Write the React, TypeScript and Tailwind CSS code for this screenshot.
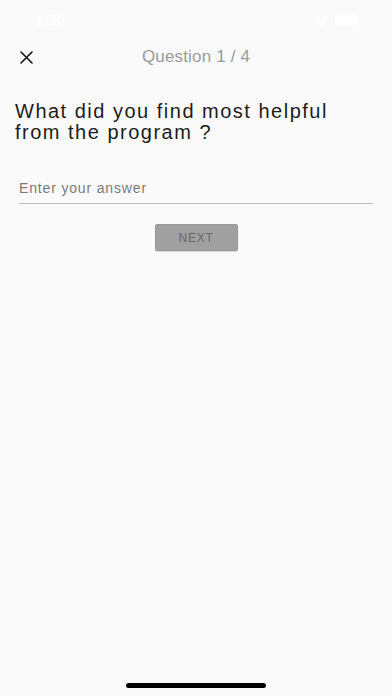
import { useState } from 'react';

export default function App() {
    const [answer, setAnswer] = useState('');

    return (
        <div className="relative flex flex-col w-[392px] h-[696px] bg-[#fafafa] overflow-hidden font-['Liberation_Sans',Arial,sans-serif]">
            {/* Status bar (white on light bg, barely visible) */}
            <div className="flex items-center justify-between h-[39px] px-[35px] pt-[2px]">
                <span className="text-[15px] font-semibold text-white">1:30</span>
                <div className="flex items-center gap-[5px] text-white">
                    <svg width="16" height="12" viewBox="0 0 16 12" fill="#ffffff">
                        <path d="M8 11.5l2.2-2.6a3.2 3.2 0 00-4.4 0zM3.9 6.9l1.2 1.4a4.4 4.4 0 015.8 0l1.2-1.4a6.3 6.3 0 00-8.2 0zM1.3 3.9l1.2 1.4a8.3 8.3 0 0111 0l1.2-1.4a10.2 10.2 0 00-13.4 0z" />
                    </svg>
                    <div className="w-[22px] h-[11px] rounded-[3px] bg-white" />
                </div>
            </div>

            {/* Header */}
            <div className="relative flex items-center justify-center h-[36px]">
                <button className="absolute left-[16px] top-[8px] p-[4px]">
                    <svg width="13" height="13" viewBox="0 0 13 13" stroke="#111111" strokeWidth="1.6" strokeLinecap="round">
                        <path d="M1 1l11 11M12 1L1 12" />
                    </svg>
                </button>
                <span className="text-[17px] font-medium text-[#9b9b9b] tracking-[0.01em]">Question 1 / 4</span>
            </div>

            {/* Question */}
            <div className="px-[15px] pt-[26px]">
                <h2 className="text-[20px] leading-[21px] tracking-[0.075em] text-[#1c1c1c]">
                    What did you find most helpful
                    <br />
                    from the program ?
                </h2>
            </div>

            {/* Answer input */}
            <div className="mx-[19px] mt-[30px] border-b border-[#bdbdbd]">
                <input
                    type="text"
                    value={answer}
                    onChange={(e) => setAnswer(e.target.value)}
                    placeholder="Enter your answer"
                    className="w-full h-[30px] bg-transparent text-[14px] tracking-[0.06em] text-[#333] placeholder-[#7a7a7a] outline-none"
                />
            </div>

            {/* Next button */}
            <div className="flex justify-center mt-[20px]">
                <button className="w-[83px] h-[27px] bg-[#a0a0a0] border border-[#999] rounded-[2px] shadow-[0_1px_1px_rgba(0,0,0,0.15)] text-[12px] tracking-[0.06em] text-[#686868]">
                    NEXT
                </button>
            </div>

            {/* Home indicator */}
            <div className="absolute bottom-[8px] left-[126px] w-[140px] h-[5px] rounded-full bg-black" />
        </div>
    );
}
